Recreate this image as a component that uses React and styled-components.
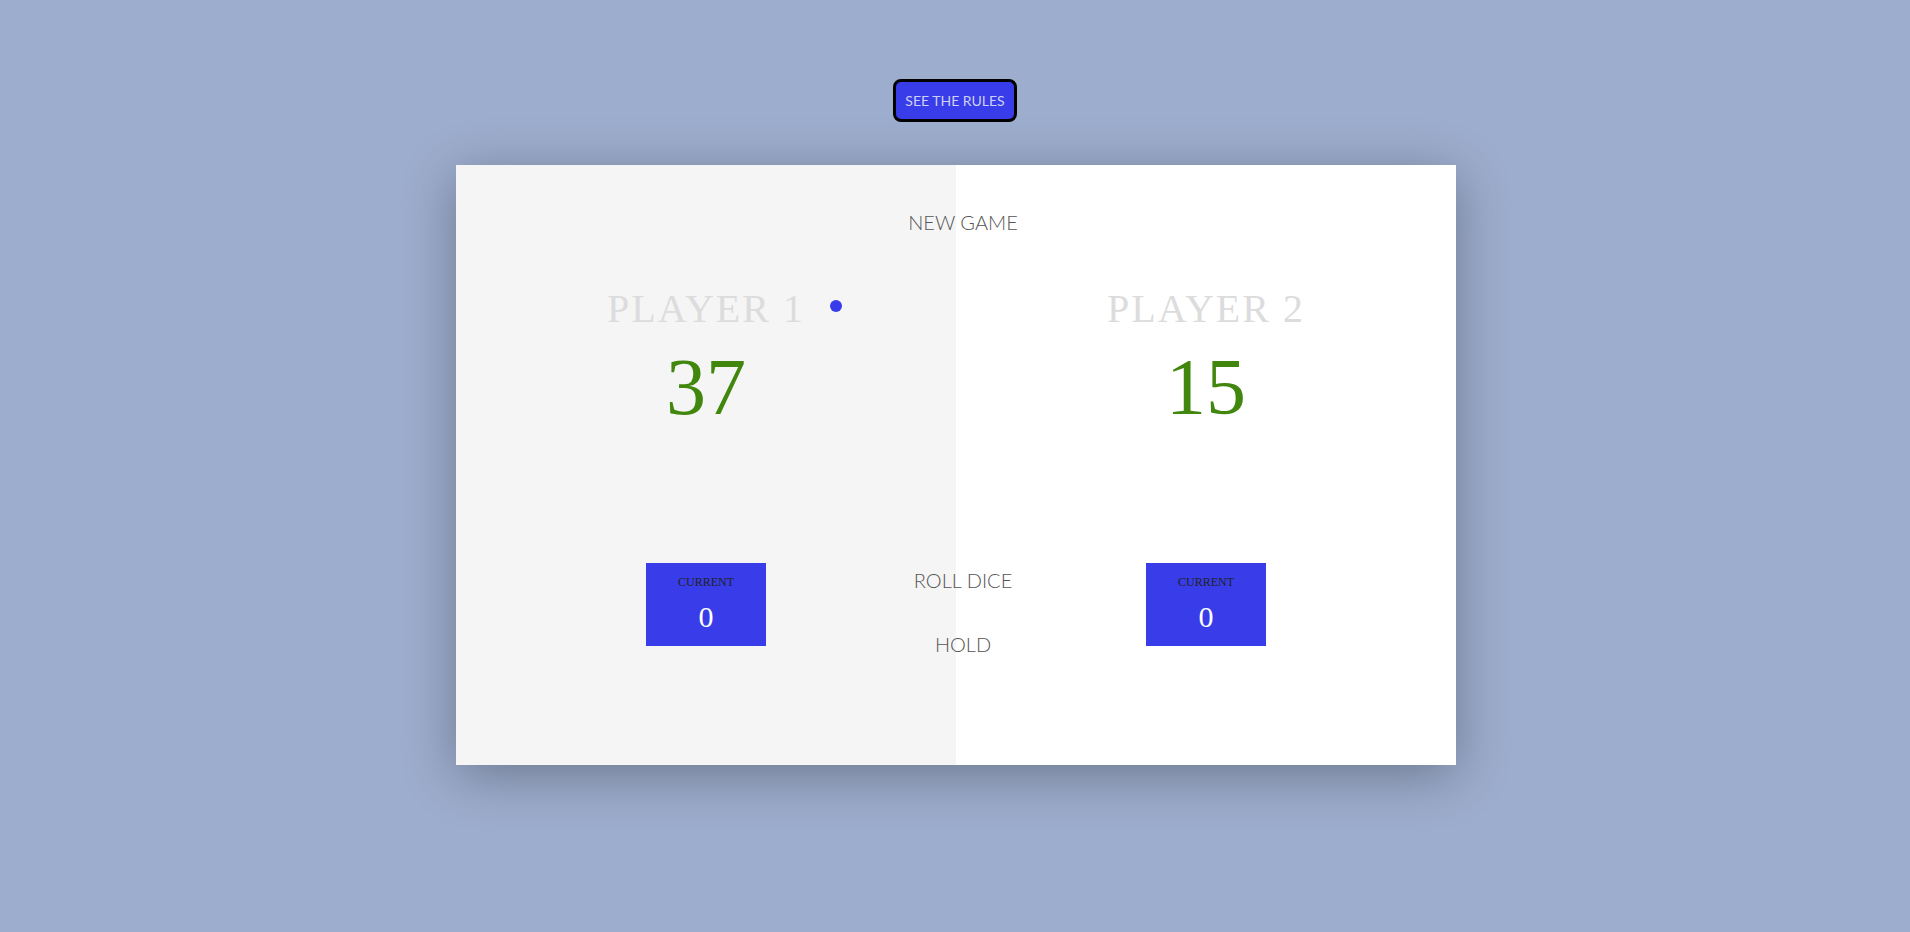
import React from "react";
import styled, { createGlobalStyle } from "styled-components";

const GlobalStyle = createGlobalStyle`
  * { box-sizing: border-box; }
  html, body { margin: 0; padding: 0; }
  body {
    background: #9dadcd;
    font-family: "Liberation Serif", "Times New Roman", serif;
    min-height: 932px;
  }
`;

const Page = styled.div`
  display: flex;
  flex-direction: column;
  align-items: center;
  padding-top: 79px;
`;

const RulesButton = styled.button`
  height: 43px;
  padding: 0 9px;
  margin: 0 0 43px;
  border: 3px solid #000;
  border-radius: 8px;
  background: #383de9;
  color: #cdd0f3;
  font-family: Lato, "Liberation Sans", sans-serif;
  font-size: 14px;
  font-weight: 400;
  cursor: pointer;
`;

const Card = styled.div`
  width: 1000px;
  height: 600px;
  margin-left: 2px;
  display: grid;
  grid-template-columns: 1fr 1fr;
  grid-template-rows: 600px;
  background: #fff;
  box-shadow: 0 10px 50px rgba(0, 0, 0, 0.3);
  overflow: hidden;
`;

const Panel = styled.section`
  grid-row: 1;
  grid-column: ${(p) => p.$col};
  padding: 100px;
  background: ${(p) => (p.$active ? "#f5f5f5" : "#fff")};
  display: flex;
  flex-direction: column;
`;

const PlayerName = styled.div`
  position: relative;
  margin-top: 20px;
  margin-bottom: 10px;
  font-size: 40px;
  letter-spacing: 2px;
  text-align: center;
  text-transform: uppercase;
  color: #dcdcdc;
`;

const ActiveDot = styled.span`
  position: absolute;
  top: 15px;
  right: 14px;
  width: 12px;
  height: 12px;
  border-radius: 50%;
  background: #383de9;
`;

const Score = styled.div`
  font-size: 80px;
  text-align: center;
  color: #41870d;
  margin-bottom: 130px;
`;

const CurrentBox = styled.div`
  width: 120px;
  margin: 0 auto;
  padding: 12px;
  background: #383de9;
  text-align: center;
`;

const CurrentLabel = styled.div`
  font-size: 12px;
  color: #222;
  text-transform: uppercase;
  margin-bottom: 10px;
`;

const CurrentScore = styled.div`
  font-size: 30px;
  color: #fff;
`;

const Controls = styled.div`
  grid-row: 1;
  grid-column: 1 / -1;
  z-index: 1;
  justify-self: center;
  display: flex;
  flex-direction: column;
  align-items: center;
  padding-top: 44px;
  margin-left: 14px;
`;

const ControlButton = styled.button`
  width: 200px;
  height: 26px;
  padding: 0;
  margin-top: ${(p) => p.$gap || 0}px;
  border: none;
  background: none;
  color: #555;
  font-family: Lato, "Liberation Sans", sans-serif;
  font-size: 20px;
  font-weight: 300;
  line-height: 26px;
  text-transform: uppercase;
  cursor: pointer;
`;

function PlayerPanel({ col, name, score, current, active }) {
  return (
    <Panel $col={col} $active={active}>
      <PlayerName>
        {name}
        {active && <ActiveDot />}
      </PlayerName>
      <Score>{score}</Score>
      <CurrentBox>
        <CurrentLabel>Current</CurrentLabel>
        <CurrentScore>{current}</CurrentScore>
      </CurrentBox>
    </Panel>
  );
}

export default function App() {
  return (
    <>
      <GlobalStyle />
      <Page>
        <RulesButton>SEE THE RULES</RulesButton>
        <Card>
          <PlayerPanel col={1} name="Player 1" score={37} current={0} active />
          <PlayerPanel col={2} name="Player 2" score={15} current={0} />
          <Controls>
            <ControlButton>New game</ControlButton>
            <ControlButton $gap={332}>Roll dice</ControlButton>
            <ControlButton $gap={38}>Hold</ControlButton>
          </Controls>
        </Card>
      </Page>
    </>
  );
}
